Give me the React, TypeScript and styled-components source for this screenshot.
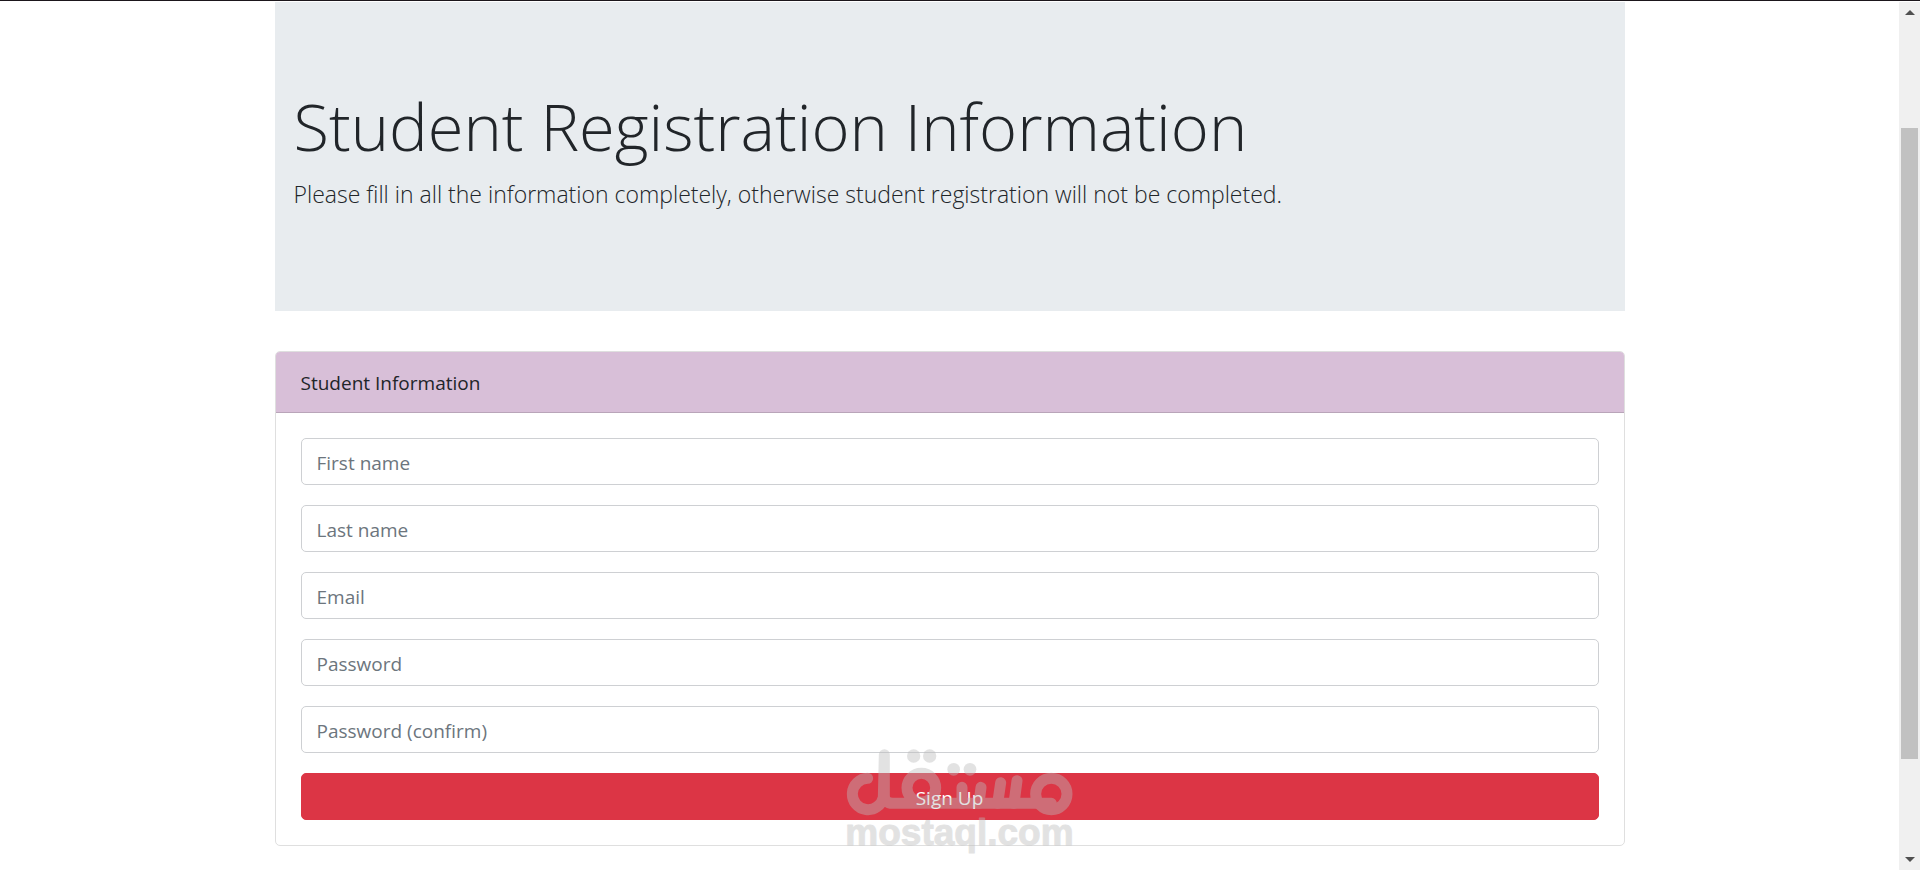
import React from 'react';
import styled, { createGlobalStyle } from 'styled-components';

const GlobalStyle = createGlobalStyle`
  *, *::before, *::after { box-sizing: border-box; }
  body {
    margin: 0;
    background: #fff;
    color: #212529;
    font-family: 'Open Sans', 'Noto Sans', sans-serif;
    font-size: 19px;
    line-height: 30px;
  }
`;

const Page = styled.div`
  display: flex;
  min-height: 100vh;
  border-top: 1px solid #1b161b;
`;

const Content = styled.main`
  flex: 1;
  min-width: 0;
  padding-top: 1px;
`;

const Container = styled.div`
  width: calc(100% - 40px);
  max-width: 1350px;
  margin: 0 auto;
`;

const Banner = styled.header`
  margin-bottom: 40px;
  padding: 82px 19px 101px;
  background: #e8ecef;
`;

const Title = styled.h1`
  margin: 0 0 10px;
  font-size: 65px;
  font-weight: 300;
  line-height: 84px;
`;

const Lead = styled.p`
  margin: 0;
  font-size: 23px;
  font-weight: 300;
  line-height: 32px;
`;

const Card = styled.section`
  position: relative;
  border: 1px solid #dfdfdf;
  border-radius: 5px;
`;

const CardHeader = styled.h2`
  margin: 0;
  padding: 16px 25px 14px;
  border-bottom: 1px solid #b9a5b9;
  border-radius: 4px 4px 0 0;
  background: #d8bfd8;
  font-size: 19px;
  font-weight: 400;
`;

const Form = styled.form`
  display: flex;
  flex-direction: column;
  gap: 20px;
  padding: 25px;
`;

const Field = styled.input`
  width: 100%;
  height: 47px;
  padding: 2px 15px 0;
  border: 1px solid #ced0d3;
  border-radius: 5px;
  background: #fff;
  color: #495057;
  font: inherit;

  &::placeholder {
    color: #6c757d;
    opacity: 1;
  }
`;

const SubmitButton = styled.button`
  height: 47px;
  padding: 3px 15px 0;
  border: 1px solid #dc3545;
  border-radius: 5px;
  background: #dc3545;
  color: #fff;
  font: inherit;
  cursor: pointer;
`;

const Watermark = styled.svg`
  position: absolute;
  bottom: -20px;
  left: 50%;
  width: 260px;
  height: 125px;
  margin-left: -120px;
  opacity: 0.42;
  pointer-events: none;
`;

const ScrollRail = styled.div`
  display: flex;
  flex-direction: column;
  width: 21px;
  margin-top: 1px;
  background: #f0f0f0;
`;

const ArrowButton = styled.button`
  display: flex;
  align-items: center;
  justify-content: center;
  height: 21px;
  padding: 0;
  border: 0;
  background: none;
`;

const RailSpace = styled.div<{ $share: number }>`
  flex: ${({ $share }) => $share};
`;

const Thumb = styled.div`
  flex: 631;
  margin: 0 2px;
  background: #c1c1c1;
`;

const fields = [
  { name: 'firstName', label: 'First name', type: 'text' },
  { name: 'lastName', label: 'Last name', type: 'text' },
  { name: 'email', label: 'Email', type: 'email' },
  { name: 'password', label: 'Password', type: 'password' },
  { name: 'passwordConfirm', label: 'Password (confirm)', type: 'password' },
];

function MostaqlMark() {
  return (
    <Watermark viewBox="0 0 780 375" aria-hidden="true">
      <g fill="none" stroke="#bcbcbc" strokeWidth="33" strokeLinecap="round" strokeLinejoin="round">
        <path d="M113 115A47 47 0 1 0 160 172L163 44V165Q163 190 188 190H664" />
        <circle cx="274" cy="143" r="43" />
        <circle cx="664" cy="162" r="47" />
        <path d="M396 142V190M453 142L447 190M512 128L503 190M561 122L552 190" />
      </g>
      <g fill="#bcbcbc">
        <circle cx="251" cy="48" r="20" />
        <circle cx="299" cy="48" r="20" />
        <circle cx="371" cy="88" r="19" />
        <circle cx="420" cy="88" r="19" />
        <text
          x="46"
          y="316"
          fontFamily="'Liberation Sans', sans-serif"
          fontSize="111"
          fontWeight="700"
          stroke="#bcbcbc"
          strokeWidth="3"
          strokeLinejoin="round"
        >
          mostaql.com
        </text>
      </g>
    </Watermark>
  );
}

export default function App() {
  return (
    <>
      <GlobalStyle />
      <Page>
        <Content>
          <Container>
            <Banner>
              <Title>Student Registration Information</Title>
              <Lead>
                Please fill in all the information completely, otherwise student registration will not be completed.
              </Lead>
            </Banner>
            <Card>
              <CardHeader>Student Information</CardHeader>
              <Form onSubmit={(event) => event.preventDefault()}>
                {fields.map(({ name, label, type }) => (
                  <Field key={name} name={name} type={type} placeholder={label} aria-label={label} />
                ))}
                <SubmitButton type="submit">Sign Up</SubmitButton>
              </Form>
              <MostaqlMark />
            </Card>
          </Container>
        </Content>
        <ScrollRail>
          <ArrowButton type="button" aria-label="Scroll up">
            <svg width="10" height="5" viewBox="0 0 10 5"><path d="M0 5L5 0L10 5Z" fill="#505050" /></svg>
          </ArrowButton>
          <RailSpace $share={105} />
          <Thumb />
          <RailSpace $share={90} />
          <ArrowButton type="button" aria-label="Scroll down">
            <svg width="10" height="5" viewBox="0 0 10 5"><path d="M0 0H10L5 5Z" fill="#505050" /></svg>
          </ArrowButton>
        </ScrollRail>
      </Page>
    </>
  );
}
